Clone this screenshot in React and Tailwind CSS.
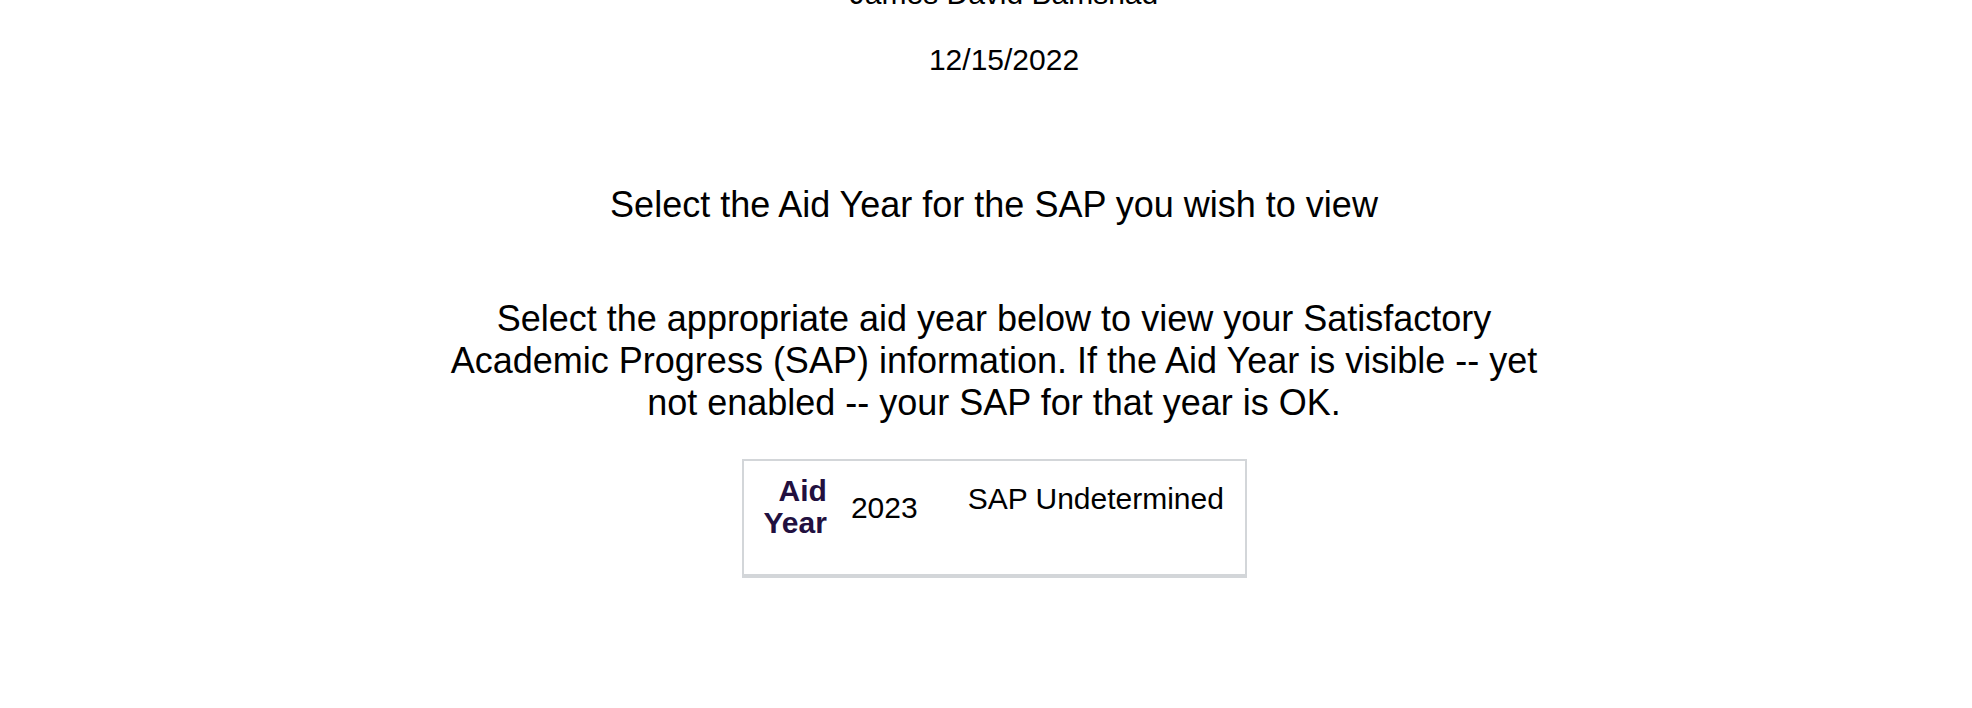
export default function App() {
  return (
    <div className="min-h-screen bg-white text-black font-['Liberation_Sans',Arial,sans-serif] overflow-hidden">
      {/* student header */}
      <div className="pl-[36px] text-center text-[30px] leading-[34px]">
        <p className="-mt-[23px]">James David Bamshad</p>
        <p className="mt-[32px]">12/15/2022</p>
      </div>

      <div className="pl-4 flex flex-col items-center">
        <h2 className="mt-[107px] text-[36px] leading-[42px] font-normal text-center">
          Select the Aid Year for the SAP you wish to view
        </h2>

        <p className="mt-[72px] w-[1110px] text-[36px] leading-[42px] text-center">
          Select the appropriate aid year below to view your Satisfactory Academic Progress (SAP)
          information. If the Aid Year is visible -- yet not enabled -- your SAP for that year is OK.
        </p>

        {/* aid year table */}
        <div className="mt-[35px] w-[505px] h-[119px] border-2 border-b-4 border-[#d3d6d9] flex items-start text-[30px] leading-[32px]">
          <div className="ml-[20px] mt-[14px] text-right font-bold text-[#22103f]">
            Aid
            <br />
            Year
          </div>
          <div className="ml-[24px] mt-[31px]">2023</div>
          <div className="ml-[50px] mt-[22px]">SAP Undetermined</div>
        </div>
      </div>
    </div>
  );
}
